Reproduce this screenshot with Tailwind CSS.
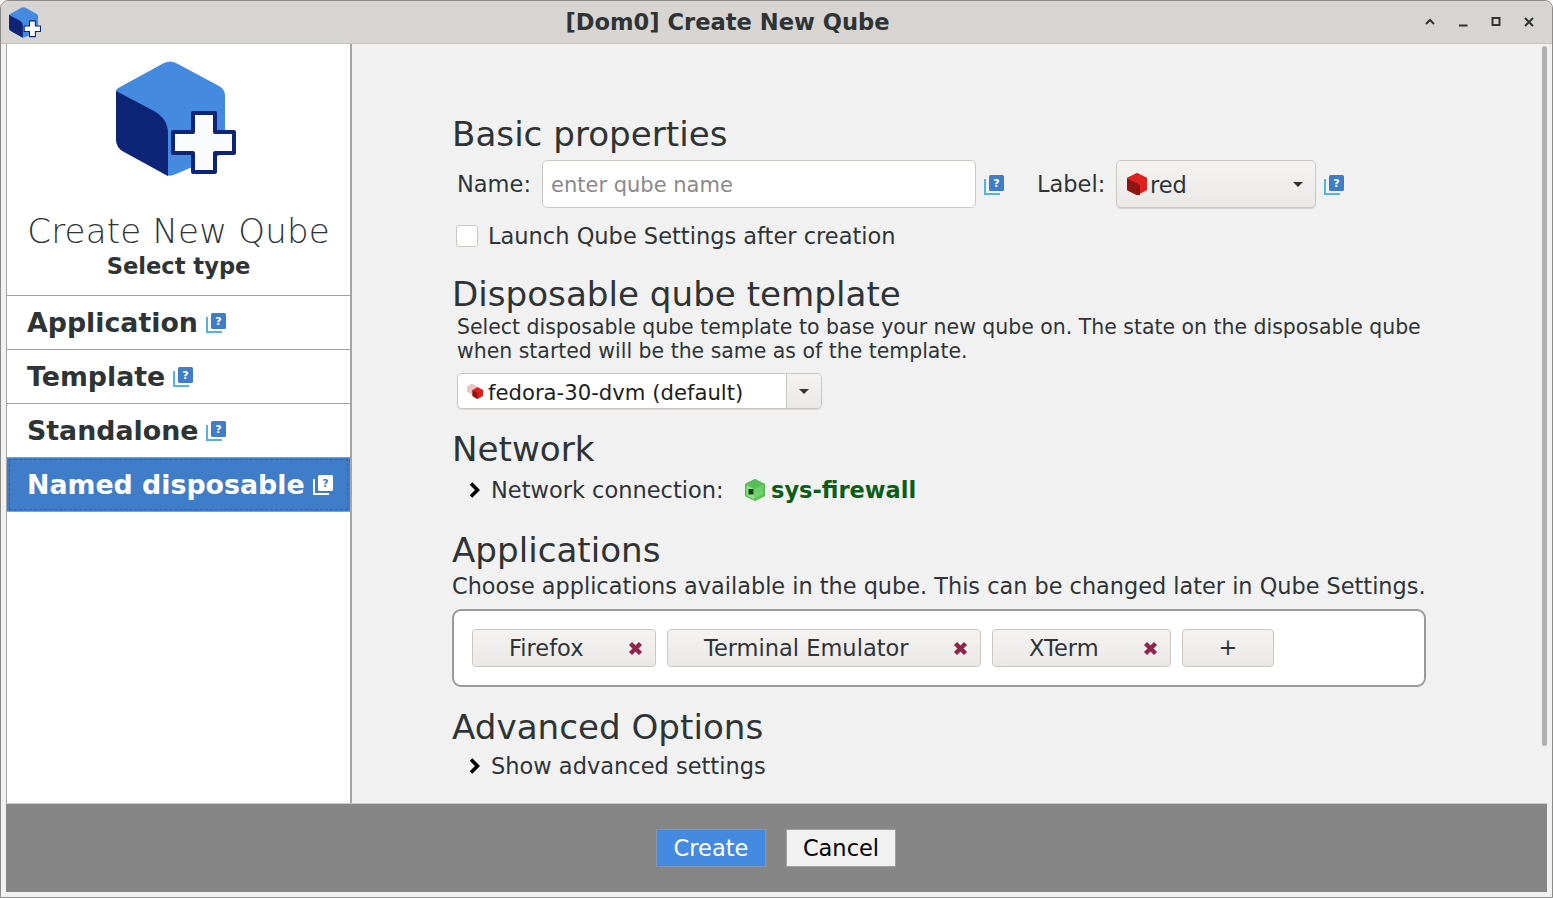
<!DOCTYPE html>
<html>
<head>
<meta charset="utf-8">
<script src="https://cdn.jsdelivr.net/npm/@tailwindcss/browser@4"></script>
</head>
<body class="m-0 bg-white">
<svg width="0" height="0" class="absolute">
  <defs>
    <symbol id="logo" viewBox="0 0 120 116" overflow="visible">
      <path fill="#438ae0" d="M48 2Q54 -1 60 2L103 25Q109 28 109 35V88Q109 92 104 94L60 113Q54 116 50 114L8 90Q0 86 0 78V30Q0 28 4 26Z"/>
      <path fill="#0e2476" d="M0 30L38 50Q52 58 52 72V115L8 91Q0 87 0 78Z"/>
      <path fill="#fafbfd" stroke="#0e2476" stroke-width="4" stroke-linejoin="round" d="M77 52H99V71H118V92H99V111H77V92H57V71H77Z"/>
    </symbol>
    <symbol id="help" viewBox="0 0 20 20">
      <path fill="none" stroke="#55b3dc" stroke-width="2" d="M1 4V19H16"/>
      <rect x="5" y="0" width="15" height="16" rx="1.5" fill="#3f7dc9"/>
      <text x="12.5" y="12" text-anchor="middle" font-family="DejaVu Sans" font-weight="700" font-size="11" fill="#fff">?</text>
    </symbol>
    <symbol id="helpw" viewBox="0 0 20 20">
      <path fill="none" stroke="#fff" stroke-width="2" d="M1 4V19H16"/>
      <rect x="5" y="0" width="15" height="16" rx="1.5" fill="#fff"/>
      <text x="12.5" y="12" text-anchor="middle" font-family="DejaVu Sans" font-weight="700" font-size="11" fill="#3f7dc9">?</text>
    </symbol>
    <symbol id="x" viewBox="0 0 15 15">
      <path d="M2.500 2.500L12.500 12.500M12.500 2.500L2.500 12.500" stroke="#8f2349" stroke-width="4.400" stroke-linecap="butt"/>
    </symbol>
    <symbol id="chev" viewBox="0 0 12 16">
      <path d="M3 1.500L9.500 8L3 14.500" fill="none" stroke="#000" stroke-width="3.600"/>
    </symbol>
  </defs>
</svg>
<div class="w-[1553px] h-[898px] flex flex-col overflow-hidden bg-[#f1f1f1] rounded-t-[8px] border border-[#8a8a88] font-['DejaVu_Sans',sans-serif] text-[#2e3436]">
  <header class="relative h-[43px] shrink-0 flex items-center justify-between bg-[#d8d4d1] border-b border-[#c9c3be]">
    <svg class="w-[32px] h-[31px] ml-[8px] mt-[1px]" viewBox="0 0 120 116"><use href="#logo"/></svg>
    <div class="absolute left-0 right-0 top-[1px] h-[42px] flex items-center justify-center pr-[98px] text-[22.6px] font-bold text-[#2e3436]">[Dom0] Create New Qube</div>
    <div class="flex items-center mr-[18px] gap-[23px]">
      <svg class="w-[10px] h-[10px]" viewBox="0 0 10 10"><path d="M1 7L5 3L9 7" fill="none" stroke="#2e3436" stroke-width="2"/></svg>
      <svg class="w-[10px] h-[10px]" viewBox="0 0 10 10"><path d="M1 8.500H9.500" fill="none" stroke="#2e3436" stroke-width="2"/></svg>
      <svg class="w-[10px] h-[10px]" viewBox="0 0 10 10"><rect x="1.500" y="1" width="7" height="7" fill="none" stroke="#2e3436" stroke-width="2"/></svg>
      <svg class="w-[10px] h-[10px]" viewBox="0 0 10 10"><path d="M1 1L9 9M9 1L1 9" fill="none" stroke="#2e3436" stroke-width="2"/></svg>
    </div>
  </header>

  <div class="flex flex-1 min-h-0">
    <aside class="w-[346px] ml-[5px] shrink-0 bg-white border-l border-r-2 border-[#a5a5a5] flex flex-col">
      <div class="h-[251px] shrink-0 flex flex-col items-center">
        <svg class="w-[120px] h-[116px] mt-[17px] ml-[-5px]" viewBox="0 0 120 116"><use href="#logo"/></svg>
        <div class="mt-[32px] text-[34px] leading-[44px] font-extralight tracking-[.2px] text-[#2e3436] whitespace-nowrap">Create New Qube</div>
        <div class="text-[22.6px] leading-[26px] font-bold text-[#2e3436]">Select type</div>
      </div>
      <div class="h-[54px] border-t border-[#a0a0a0] flex items-center pl-[20px] gap-[8px] text-[26.8px] font-bold"><span class="mt-[2px]">Application</span><svg class="w-[20px] h-[20px]"><use href="#help"/></svg></div>
      <div class="h-[54px] border-t border-[#a0a0a0] flex items-center pl-[20px] gap-[8px] text-[26.8px] font-bold"><span class="mt-[2px]">Template</span><svg class="w-[20px] h-[20px]"><use href="#help"/></svg></div>
      <div class="h-[54px] border-t border-[#a0a0a0] flex items-center pl-[20px] gap-[8px] text-[26.8px] font-bold"><span class="mt-[2px]">Standalone</span><svg class="w-[20px] h-[20px]"><use href="#help"/></svg></div>
      <div class="h-[55px] bg-[#3f7dc9] border-y border-[#9a9a9a] text-white flex items-center pl-[20px] gap-[8px] text-[26.8px] font-bold whitespace-nowrap outline-1 outline-dashed outline-[#35689f] outline-offset-[-3px]"><span class="mt-[2px]">Named disposable</span><svg class="w-[20px] h-[20px]"><use href="#helpw"/></svg></div>
    </aside>

    <main class="relative flex-1 min-w-0 pl-[100px] pt-[70px] bg-[#f1f1f1]">
      <div class="absolute right-[5px] top-[2px] w-[5px] h-[700px] rounded-[3px] bg-[#b0b0b0]"></div>

      <h2 class="h-[40px] leading-[40px] text-[34.15px]">Basic properties</h2>
      <div class="mt-[6px] h-[48px] flex items-center pl-[5px] text-[22.5px]">
        <span class="w-[85px] mt-[2px]">Name:</span>
        <div class="w-[434px] h-[48px] bg-white border border-[#cdc7c2] rounded-[5px] flex items-center pl-[8px] text-[21px] text-[#8a8a8a]"><span class="mt-[4px]">enter qube name</span></div>
        <svg class="w-[20px] h-[20px] ml-[8px] mt-[2px]"><use href="#help"/></svg>
        <span class="ml-[33px] w-[79px] mt-[2px]">Label:</span>
        <div class="relative w-[200px] h-[48px] border border-[#cdc7c2] rounded-[5px] bg-linear-to-b from-[#f4f3f2] to-[#ebe9e7] shadow-[0_1px_1px_rgba(0,0,0,.12)] flex items-center pl-[10px]">
          <svg class="w-[20px] h-[22px]" viewBox="0 0 20 22"><path fill="#dd2320" stroke="#dd2320" stroke-width="2" stroke-linejoin="round" d="M10 1L19 5.500V16.500L10 21L1 16.500V5.500Z"/><path fill="#8e1513" d="M0 5.500L13 12V22H10L0 17Z"/></svg>
          <span class="ml-[3px] mt-[4px]">red</span>
          <span class="absolute right-[12px] top-[21px] border-x-[5px] border-t-[5px] border-x-transparent border-t-[#2e3436]"></span>
        </div>
        <svg class="w-[20px] h-[20px] ml-[8px] mt-[2px]"><use href="#help"/></svg>
      </div>
      <div class="mt-[8px] h-[40px] flex items-center pl-[4px] text-[22.5px]">
        <span class="w-[22px] h-[22px] bg-white border border-[#cdc7c2] rounded-[3px] shrink-0"></span>
        <span class="ml-[10px] mt-[2px]">Launch Qube Settings after creation</span>
      </div>

      <h2 class="mt-[18px] h-[40px] leading-[40px] text-[34.15px]">Disposable qube template</h2>
      <p class="mt-[1px] pl-[5px] text-[20.45px] leading-[24px] whitespace-nowrap">Select disposable qube template to base your new qube on. The state on the disposable qube<br>when started will be the same as of the template.</p>
      <div class="mt-[10px] ml-[5px] w-[365px] h-[36px] flex border border-[#cdc7c2] rounded-[5px] bg-white text-[21.2px] text-[#1c1f20] overflow-hidden shadow-[0_1px_1px_rgba(0,0,0,.1)]">
        <div class="w-[328px] flex items-center pl-[8px]">
          <svg class="w-[18px] h-[16px]" viewBox="0 0 18 16"><path fill="#ecc3c3" stroke="#ecc3c3" stroke-linejoin="round" d="M6 1L10.500 3.500V8.500L6 11L1.500 8.500V3.500Z"/><path fill="#dd1f1c" d="M11.500 4L17 7V13L11.500 16L6.500 13V7Z"/><path fill="#8e1513" d="M6.500 7L11.500 10V16L6.500 13Z"/></svg>
          <span class="ml-[4px] mt-[4px] whitespace-nowrap">fedora-30-dvm (default)</span>
        </div>
        <div class="relative flex-1 border-l border-[#cdc7c2] bg-linear-to-b from-[#f4f3f2] to-[#ebe9e7]">
          <span class="absolute left-[12px] top-[15px] border-x-[5px] border-t-[5px] border-x-transparent border-t-[#2e3436]"></span>
        </div>
      </div>

      <h2 class="mt-[20px] h-[40px] leading-[40px] text-[34.15px]">Network</h2>
      <div class="mt-[1px] h-[40px] flex items-center pl-[16px] text-[22.5px]">
        <svg class="w-[12px] h-[16px]"><use href="#chev"/></svg>
        <span class="ml-[11px] w-[254px] mt-[2px]">Network connection:</span>
        <svg class="w-[20px] h-[24px]" viewBox="0 0 20 24"><path fill="#6ecf6c" stroke="#5abd5a" stroke-width="2" stroke-linejoin="round" d="M10 2L19 6.500V17.500L10 22L1 17.500V6.500Z"/><path fill="#57bb57" d="M2 6.500L10 2L18 6.500L10 11Z"/><path fill="#8fe28a" d="M1.500 7.500L9 11.500V21.500L1.500 17.500Z"/><rect x="3.500" y="11" width="5" height="5.500" fill="#143f14"/></svg>
        <span class="ml-[6px] mt-[2px] font-bold text-[#0c5d18]">sys-firewall</span>
      </div>

      <h2 class="mt-[20px] h-[40px] leading-[40px] text-[34.15px]">Applications</h2>
      <p class="mt-[4px] h-[24px] leading-[24px] text-[22.4px] whitespace-nowrap">Choose applications available in the qube. This can be changed later in Qube Settings.</p>
      <div class="mt-[11px] w-[974px] h-[78px] bg-white border-2 border-[#9a9a9a] rounded-[9px] flex items-center pl-[18px] text-[22.5px]">
        <div class="w-[184px] h-[38px] mr-[11px] shrink-0 border border-[#cdc7c2] rounded-[4px] bg-linear-to-b from-[#f4f3f2] to-[#ebe9e7] flex items-center justify-between pl-[36px] pr-[12px]"><span class="mt-[2px]">Firefox</span><svg class="w-[15px] h-[15px]"><use href="#x"/></svg></div>
        <div class="w-[314px] h-[38px] mr-[11px] shrink-0 border border-[#cdc7c2] rounded-[4px] bg-linear-to-b from-[#f4f3f2] to-[#ebe9e7] flex items-center justify-between pl-[36px] pr-[12px]"><span class="mt-[2px]">Terminal Emulator</span><svg class="w-[15px] h-[15px]"><use href="#x"/></svg></div>
        <div class="w-[179px] h-[38px] mr-[11px] shrink-0 border border-[#cdc7c2] rounded-[4px] bg-linear-to-b from-[#f4f3f2] to-[#ebe9e7] flex items-center justify-between pl-[36px] pr-[12px]"><span class="mt-[2px]">XTerm</span><svg class="w-[15px] h-[15px]"><use href="#x"/></svg></div>
        <div class="w-[92px] h-[38px] shrink-0 border border-[#cdc7c2] rounded-[4px] bg-linear-to-b from-[#f4f3f2] to-[#ebe9e7] flex items-center justify-center">+</div>
      </div>

      <h2 class="mt-[20px] h-[40px] leading-[40px] text-[34.15px]">Advanced Options</h2>
      <div class="h-[38px] flex items-center pl-[16px] text-[22.5px]">
        <svg class="w-[12px] h-[16px]"><use href="#chev"/></svg>
        <span class="ml-[11px] mt-[2px]">Show advanced settings</span>
      </div>
    </main>
  </div>

  <footer class="h-[89px] shrink-0 mx-[5px] mb-[5px] bg-[#868686] border-t border-[#c8c8c8] flex items-center justify-center gap-[20px] pr-[1px] text-[22.5px]">
    <button class="w-[110px] h-[38px] pt-[2px] bg-[#438ae0] border border-[#7f95b0] text-white">Create</button>
    <button class="w-[110px] h-[38px] pt-[2px] bg-[#f1f1f1] border border-[#a0a0a0] text-black">Cancel</button>
  </footer>
</div>
</body>
</html>
